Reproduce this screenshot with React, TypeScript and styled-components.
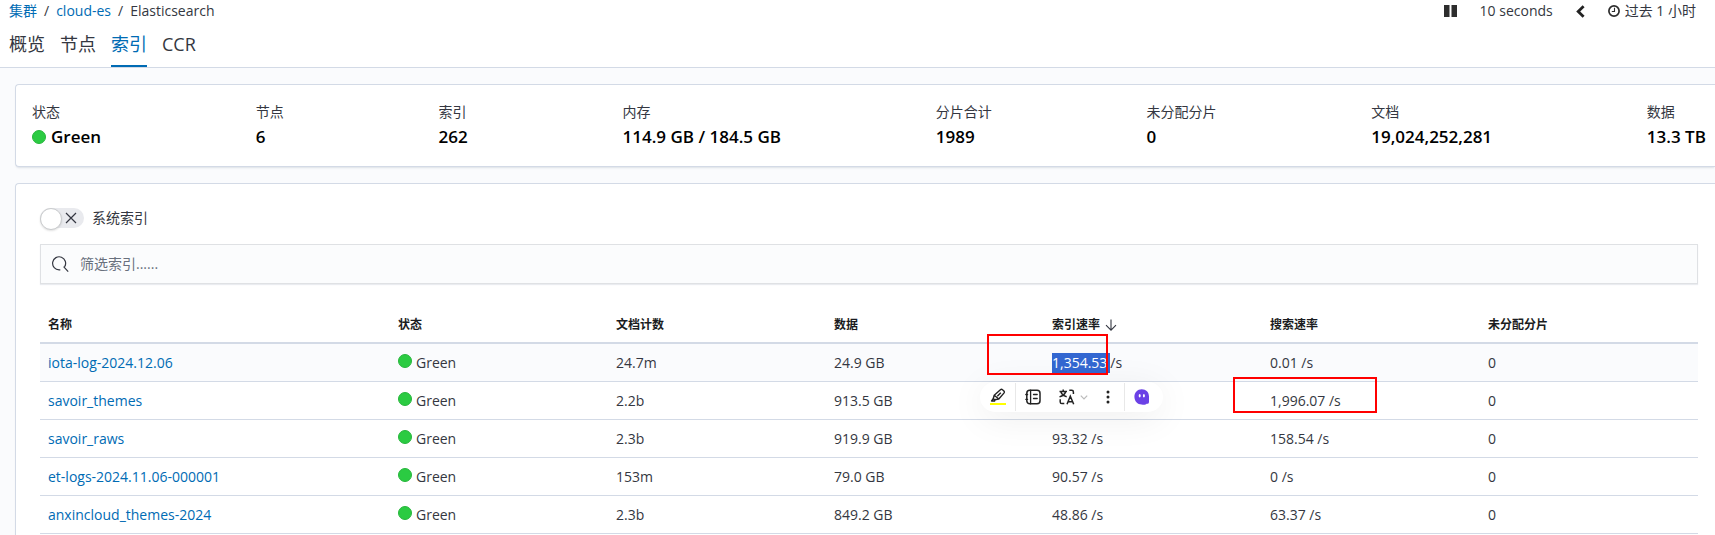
import React from "react";
import styled, { createGlobalStyle } from "styled-components";

const LINE = "#d3dae6";
const LINK = "#006bb4";

const GlobalStyle = createGlobalStyle`
  * { box-sizing: border-box; }
  body {
    margin: 0;
    background: #fafbfd;
    color: #343741;
    font-family: "Open Sans", "Noto Sans CJK SC", sans-serif;
    font-size: 14px;
    line-height: 20px;
    overflow: hidden;
  }
  #root { min-height: 100vh; }
  button, input { font: inherit; color: inherit; }
  button { border: 0; padding: 0; background: none; cursor: pointer; }
  a { color: ${LINK}; text-decoration: none; }
  svg { flex: none; }
`;

const Header = styled.header`
  background: #fff;
  border-bottom: 1px solid ${LINE};
`;

const TopBar = styled.div`
  display: flex;
  align-items: center;
  justify-content: space-between;
  height: 22px;
  padding: 0 19px 0 9px;
`;

const Breadcrumbs = styled.nav`
  display: flex;
  gap: 7px;
  white-space: pre;
`;

const TimePicker = styled.div`
  display: flex;
  align-items: center;
  gap: 23px;
`;

const TimeButton = styled.button`
  display: flex;
  align-items: center;
  gap: 5px;
`;

const Tabs = styled.nav`
  display: flex;
  gap: 15px;
  padding: 0 9px;
`;

const Tab = styled.a<{ $active?: boolean }>`
  height: 45px;
  padding-top: 10px;
  font-size: 18px;
  line-height: 24px;
  color: ${(p) => (p.$active ? LINK : "#343741")};
  border-bottom: 2px solid ${(p) => (p.$active ? LINK : "transparent")};
`;

const Main = styled.main`
  display: flex;
  flex-direction: column;
  gap: 16px;
  padding: 16px 0 0 15px;
`;

const Panel = styled.section`
  background: #fff;
  border: 1px solid ${LINE};
  border-right: 0;
  border-radius: 4px 0 0 4px;
  box-shadow: 0 2px 2px -1px rgba(152, 162, 179, 0.3);
`;

const Summary = styled(Panel)`
  display: flex;
  justify-content: space-between;
  padding: 16px 9px 16px 16px;
`;

const Stat = styled.dl`
  margin: 0;
  white-space: nowrap;
`;

const StatLabel = styled.dt`
  line-height: 22px;
`;

const StatValue = styled.dd`
  display: flex;
  align-items: center;
  gap: 5px;
  margin: 0;
  height: 27px;
  font-size: 17px;
  font-weight: 600;
  color: #000;
`;

const Listing = styled(Panel)`
  padding: 24px 17px 24px 24px;
`;

const SwitchRow = styled.label`
  display: flex;
  align-items: center;
  gap: 8px;
  height: 20px;
`;

const SwitchTrack = styled.span`
  display: grid;
  width: 44px;
  height: 20px;
  > * { grid-area: 1 / 1; }
  svg { place-self: center end; margin-right: 7px; pointer-events: none; }
`;

const SwitchInput = styled.input`
  appearance: none;
  width: 44px;
  height: 20px;
  margin: 0;
  border-radius: 10px;
  background: #e9eaee;
  &::before {
    content: "";
    display: block;
    width: 20px;
    height: 20px;
    border: 1px solid #c9cbcd;
    border-radius: 50%;
    background: #fff;
    box-shadow: 0 1px 2px rgba(0, 0, 0, 0.12);
  }
`;

const SearchBox = styled.label`
  display: flex;
  align-items: center;
  gap: 11px;
  height: 40px;
  margin: 16px 0 24px;
  padding: 0 11px;
  border: 1px solid #dfe1e4;
  background: #fbfcfd;
  box-shadow: 0 1px 1px rgba(152, 162, 179, 0.2);
`;

const SearchInput = styled.input`
  flex: 1;
  border: 0;
  outline: 0;
  padding: 0;
  background: none;
  &::placeholder { color: #69707d; opacity: 1; }
`;

const Table = styled.table`
  width: 100%;
  table-layout: fixed;
  border-collapse: separate;
  border-spacing: 0;
`;

const HeadCell = styled.th<{ $first?: boolean }>`
  width: ${(p) => (p.$first ? "350px" : "auto")};
  height: 36px;
  padding: 0 8px;
  border-bottom: 2px solid ${LINE};
  font-size: 12px;
  line-height: 18px;
  font-weight: 700;
  text-align: left;
  color: #1a1c21;
`;

const SortButton = styled.button`
  display: flex;
  align-items: center;
  gap: 5px;
`;

const Row = styled.tr<{ $hover?: boolean }>`
  background: ${(p) => (p.$hover ? "#fafbfd" : "#fff")};
`;

const Cell = styled.td`
  position: relative;
  height: 38px;
  padding: 1px 8px 0;
  border-bottom: 1px solid ${LINE};
`;

const Status = styled.span`
  display: flex;
  gap: 4px;
  svg { margin-top: 1px; }
`;

const Selected = styled.span`
  display: inline-block;
  padding-right: 3px;
  background: #3367d1;
  color: #fff;
`;

const Mark = styled.div<{ $x: number; $y: number; $w: number; $h: number }>`
  position: absolute;
  left: ${(p) => p.$x}px;
  top: ${(p) => p.$y}px;
  width: ${(p) => p.$w}px;
  height: ${(p) => p.$h}px;
  border: 2px solid #f00;
  z-index: 2;
  pointer-events: none;
`;

const Toolbar = styled.div`
  position: absolute;
  left: -64px;
  top: 38px;
  z-index: 1;
  display: flex;
  align-items: center;
  height: 30px;
  border-radius: 15px;
  background: #fff;
  box-shadow: 0 6px 36px rgba(0, 0, 0, 0.07);
`;

const ToolGroup = styled.div<{ $w: number }>`
  display: flex;
  align-items: center;
  gap: 18px;
  width: ${(p) => p.$w}px;
  height: 28px;
  padding-left: 9px;
  border-left: 1px solid transparent;
  & + & { border-left-color: #e8e8e8; }
`;

const ToolButton = styled.button`
  display: flex;
  align-items: center;
  gap: 5px;
`;

const Dot = () => (
  <svg width="14" height="14" viewBox="0 0 14 14" aria-hidden="true">
    <circle cx="7" cy="7" r="6.5" fill="#2bcb42" stroke="#27b53c" />
  </svg>
);

const PauseIcon = () => (
  <svg width="13" height="12" viewBox="0 0 13 12" fill="#2d2d2d">
    <path d="M0 0h5.500v12H0zM7.500 0H13v12H7.500z" />
  </svg>
);

const ChevronIcon = () => (
  <svg width="9" height="13" viewBox="0 0 9 13" fill="none" stroke="#222" strokeWidth="2.8">
    <path d="M7.6 1.2 2.2 6.5l5.4 5.3" />
  </svg>
);

const ClockIcon = () => (
  <svg width="12" height="12" viewBox="0 0 12 12" fill="none" stroke="#2d2d2d">
    <circle cx="6" cy="6" r="5.1" strokeWidth="1.7" />
    <path d="M6.5 2.8v3.7H3.8" strokeWidth="1.1" />
  </svg>
);

const CrossIcon = () => (
  <svg width="12" height="12" viewBox="0 0 12 12" fill="none" stroke="#343741" strokeWidth="1.2">
    <path d="m1 1 10 10M11 1 1 11" />
  </svg>
);

const SearchIcon = () => (
  <svg width="17" height="17" viewBox="0 0 17 17" fill="none" stroke="#343741" strokeWidth="1.2">
    <path d="M8.300 13.800H7.300A6.500 6.500 0 1 1 12.600 10.800M11.600 10.600l4.600 5" />
  </svg>
);

const ArrowDownIcon = () => (
  <svg width="12" height="12" viewBox="0 0 12 12" fill="none" stroke="#343741" strokeWidth="1.1">
    <path d="M6 0.5v10.6M1 6.2l5 5 5-5" />
  </svg>
);

const HighlighterIcon = () => (
  <svg width="16" height="18" viewBox="0 0 16 18" fill="none" stroke="#222" strokeWidth="1.4" strokeLinejoin="round">
    <path d="M4.200 7.200 10.400 1.700q1.100-.9 2.100 0l1.400 1.300q.9 1 0 2.100L8.800 11l-4.300.7-1.200-1.200zM4.200 7.200l4.600 3.800M7.300 8.300l3.500-3.500M3.300 10.500 1.600 13h2.900l1-1.400" />
    <path d="M0 16h16" stroke="#ffff00" strokeWidth="2" />
  </svg>
);

const NotesIcon = () => (
  <svg width="16" height="16" viewBox="0 0 16 16" fill="none" stroke="#222" strokeWidth="1.500" strokeLinecap="round">
    <rect x="1.800" y="1.200" width="13.200" height="13.600" rx="3" />
    <path d="M5.600 1.200v13.600M8.500 5.500h3.700M8.500 9.500h3.700M.8 5.500h1.800M.8 10.300h1.800" strokeWidth="1.300" />
  </svg>
);

const TranslateIcon = () => (
  <svg width="16" height="16" viewBox="0 0 16 16" fill="none" stroke="#222" strokeWidth="1.500">
    <path d="M.5 2.500h7.500M4.200.5v2M1.800 2.800Q3 6.500 7.700 7.700M6.600 2.800Q5.500 6.500.5 7.900" />
    <path d="m8 15.300 3.300-8 3.400 8M9.200 12.700h4.300M10.300 1.200h2.400q1.700 0 1.700 1.700v2M1.200 10.200v2.700q0 1.700 1.700 1.700h2.400" />
  </svg>
);

const CaretIcon = () => (
  <svg width="8" height="5" viewBox="0 0 8 5" fill="none" stroke="#bbb" strokeWidth="1.200">
    <path d="m.8.7 3.200 3.300L7.200.7" />
  </svg>
);

const MoreIcon = () => (
  <svg width="4" height="14" viewBox="0 0 4 14" fill="#222">
    <circle cx="2" cy="2" r="1.500" />
    <circle cx="2" cy="7" r="1.500" />
    <circle cx="2" cy="12" r="1.500" />
  </svg>
);

const AssistantIcon = () => (
  <svg width="16" height="16" viewBox="0 0 16 16">
    <path d="M7.700.3c4.400 0 7.300 3.100 7.300 7.200v5.300c0 1.700-.8 2-1.900 2-.7 0-1.100.7-2.500.9-1.200.2-1.800-.2-3-.2C3.500 15.500.4 12.300.4 7.800.4 3.500 3.500.3 7.700.3z" fill="#6b41e6" />
    <ellipse cx="5.700" cy="6.700" rx="1" ry="1.800" fill="#fff" />
    <ellipse cx="9.900" cy="6.700" rx="1" ry="1.800" fill="#fff" />
  </svg>
);

const stats: { label: string; value: string; dot?: boolean }[] = [
  { label: "状态", value: "Green", dot: true },
  { label: "节点", value: "6" },
  { label: "索引", value: "262" },
  { label: "内存", value: "114.9 GB / 184.5 GB" },
  { label: "分片合计", value: "1989" },
  { label: "未分配分片", value: "0" },
  { label: "文档", value: "19,024,252,281" },
  { label: "数据", value: "13.3 TB" },
];

const columns = ["名称", "状态", "文档计数", "数据", "索引速率", "搜索速率", "未分配分片"];

const rows = [
  { name: "iota-log-2024.12.06", docs: "24.7m", data: "24.9 GB", index: "1,354.53", search: "0.01 /s" },
  { name: "savoir_themes", docs: "2.2b", data: "913.5 GB", index: "", search: "1,996.07 /s" },
  { name: "savoir_raws", docs: "2.3b", data: "919.9 GB", index: "93.32 /s", search: "158.54 /s" },
  { name: "et-logs-2024.11.06-000001", docs: "153m", data: "79.0 GB", index: "90.57 /s", search: "0 /s" },
  { name: "anxincloud_themes-2024", docs: "2.3b", data: "849.2 GB", index: "48.86 /s", search: "63.37 /s" },
];

const SelectionToolbar = () => (
  <Toolbar role="toolbar">
    <ToolGroup $w={35}>
      <ToolButton aria-label="Highlight"><HighlighterIcon /></ToolButton>
    </ToolGroup>
    <ToolGroup $w={109}>
      <ToolButton aria-label="Notes"><NotesIcon /></ToolButton>
      <ToolButton aria-label="Translate"><TranslateIcon /><CaretIcon /></ToolButton>
      <ToolButton aria-label="More"><MoreIcon /></ToolButton>
    </ToolGroup>
    <ToolGroup $w={39}>
      <ToolButton aria-label="Assistant"><AssistantIcon /></ToolButton>
    </ToolGroup>
  </Toolbar>
);

export default function App() {
  return (
    <>
      <GlobalStyle />
      <Header>
        <TopBar>
          <Breadcrumbs>
            <a href="#clusters">集群</a>
            <span>/</span>
            <a href="#cloud-es">cloud-es</a>
            <span>/</span>
            <span>Elasticsearch</span>
          </Breadcrumbs>
          <TimePicker>
            <TimeButton aria-label="Pause"><PauseIcon /></TimeButton>
            <TimeButton>10 seconds</TimeButton>
            <TimeButton aria-label="Back"><ChevronIcon /></TimeButton>
            <TimeButton><ClockIcon />过去 1 小时</TimeButton>
          </TimePicker>
        </TopBar>
        <Tabs>
          <Tab href="#overview">概览</Tab>
          <Tab href="#nodes">节点</Tab>
          <Tab href="#indices" $active>索引</Tab>
          <Tab href="#ccr">CCR</Tab>
        </Tabs>
      </Header>
      <Main>
        <Summary>
          {stats.map((s) => (
            <Stat key={s.label}>
              <StatLabel>{s.label}</StatLabel>
              <StatValue>{s.dot && <Dot />}{s.value}</StatValue>
            </Stat>
          ))}
        </Summary>
        <Listing>
          <SwitchRow>
            <SwitchTrack>
              <SwitchInput type="checkbox" />
              <CrossIcon />
            </SwitchTrack>
            系统索引
          </SwitchRow>
          <SearchBox>
            <SearchIcon />
            <SearchInput type="text" placeholder="筛选索引......" aria-label="筛选索引" />
          </SearchBox>
          <Table>
            <thead>
              <tr>
                {columns.map((c, i) => (
                  <HeadCell key={c} $first={i === 0}>
                    {c === "索引速率" ? <SortButton>{c}<ArrowDownIcon /></SortButton> : c}
                  </HeadCell>
                ))}
              </tr>
            </thead>
            <tbody>
              {rows.map((r, i) => (
                <Row key={r.name} $hover={i === 0}>
                  <Cell><a href={"#" + r.name}>{r.name}</a></Cell>
                  <Cell><Status><Dot />Green</Status></Cell>
                  <Cell>{r.docs}</Cell>
                  <Cell>{r.data}</Cell>
                  <Cell>
                    {i === 0 ? (
                      <>
                        <Selected>{r.index}</Selected>/s
                        <SelectionToolbar />
                        <Mark $x={-57} $y={-10} $w={121} $h={41} />
                      </>
                    ) : (
                      r.index
                    )}
                  </Cell>
                  <Cell>
                    {r.search}
                    {i === 1 && <Mark $x={-29} $y={-5} $w={144} $h={36} />}
                  </Cell>
                  <Cell>0</Cell>
                </Row>
              ))}
            </tbody>
          </Table>
        </Listing>
      </Main>
    </>
  );
}
